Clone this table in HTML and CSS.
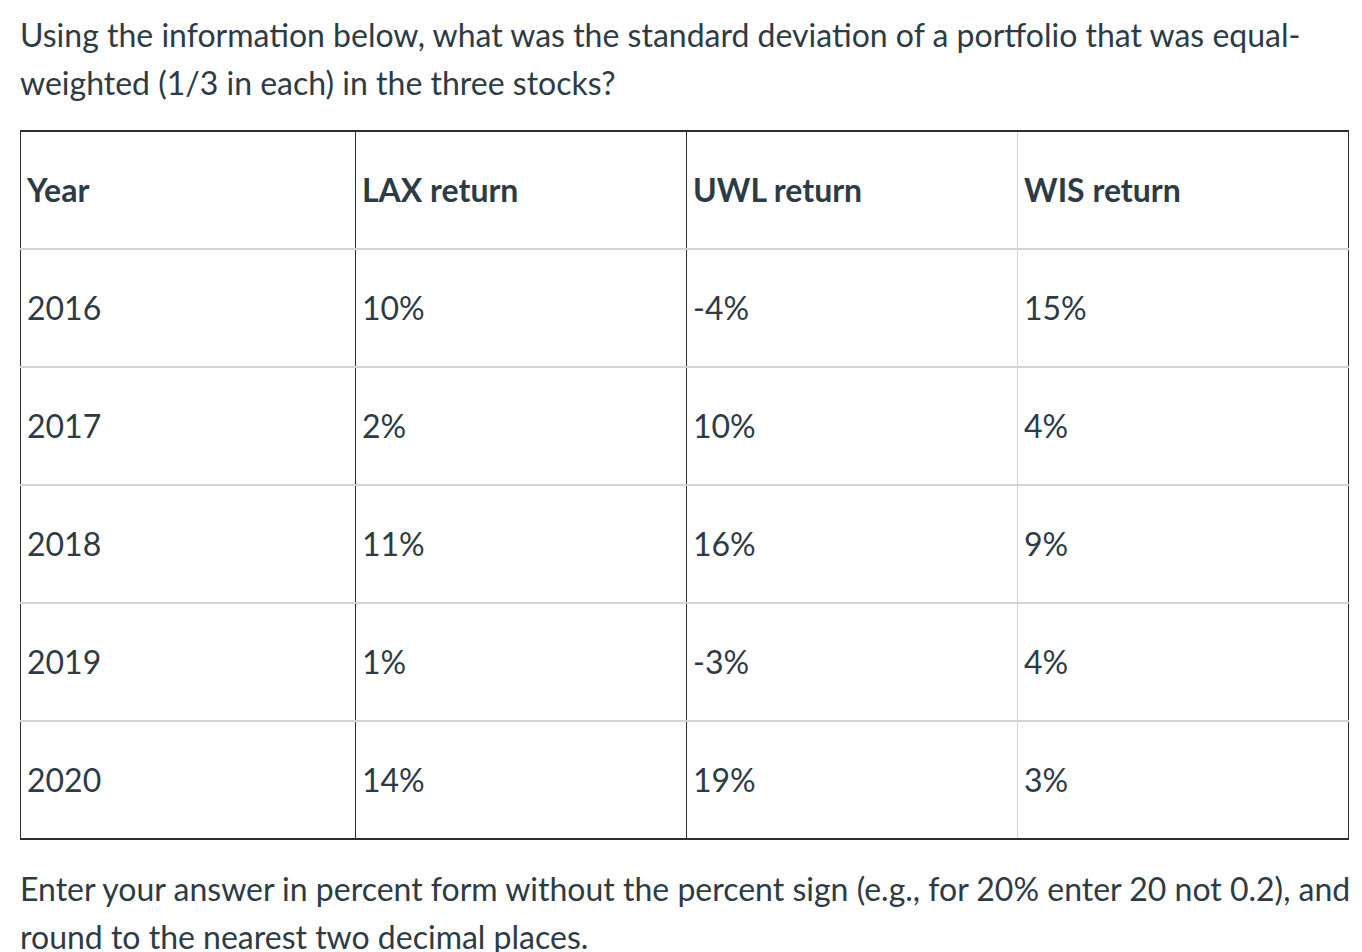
FILE: index.html
```html
<!DOCTYPE html>
<html>
<head>
<meta charset="utf-8">
<link rel="stylesheet" href="styles.css">
</head>
<body>
<div class="content">
<p class="question">Using the information below, what was the standard deviation of a portfolio that was equal-weighted (1/3 in each) in the three stocks?</p>
<table class="data">
<colgroup><col class="c1"><col class="c2"><col class="c3"><col class="c4"></colgroup>
<thead>
<tr><th>Year</th><th class="dark">LAX return</th><th class="dark">UWL return</th><th>WIS return</th></tr>
</thead>
<tbody>
<tr><td>2016</td><td class="dark">10%</td><td class="dark">-4%</td><td>15%</td></tr>
<tr><td>2017</td><td class="dark">2%</td><td class="dark">10%</td><td>4%</td></tr>
<tr><td>2018</td><td class="dark">11%</td><td class="dark">16%</td><td>9%</td></tr>
<tr><td>2019</td><td class="dark">1%</td><td class="dark">-3%</td><td>4%</td></tr>
<tr><td>2020</td><td class="dark">14%</td><td class="dark">19%</td><td>3%</td></tr>
</tbody>
</table>
<p class="note">Enter your answer in percent form without the percent sign (e.g., for 20% enter 20 not 0.2), and round to the nearest two decimal places.</p>
</div>
</body>
</html>
```
FILE: styles.css
```css
html, body {
  margin: 0;
  padding: 0;
  background: #ffffff;
}
body {
  font-family: Lato, "Noto Sans", sans-serif;
  color: #2d3b45;
  font-size: 32px;
  line-height: 47.5px;
}
.content {
  padding: 11px 10px 0 20px;
}
.question {
  margin: 0 0 24px 0;
}
.data {
  width: 1328px;
  border-collapse: collapse;
  table-layout: fixed;
  border-top: 2px solid #2d2d2d;
  border-bottom: 2px solid #2d2d2d;
  border-left: 1px solid #2d2d2d;
  border-right: 1px solid #2d2d2d;
}
.c1 { width: 335px; }
.c2 { width: 331px; }
.c3 { width: 331px; }
.c4 { width: 331px; }
.data th, .data td {
  height: 118px;
  padding: 0 6px;
  text-align: left;
  vertical-align: middle;
  border-top: 2px solid #d3d3d3;
  border-left: 1px solid #d3d3d3;
  box-sizing: border-box;
}
.data th {
  font-weight: 700;
  border-top: 2px solid #2d2d2d;
}
.data th:first-child, .data td:first-child {
  border-left: 1px solid #2d2d2d;
}
.data .dark {
  border-left: 1px solid #2d2d2d;
}
.note {
  margin: 25px 0 0 0;
}
```
